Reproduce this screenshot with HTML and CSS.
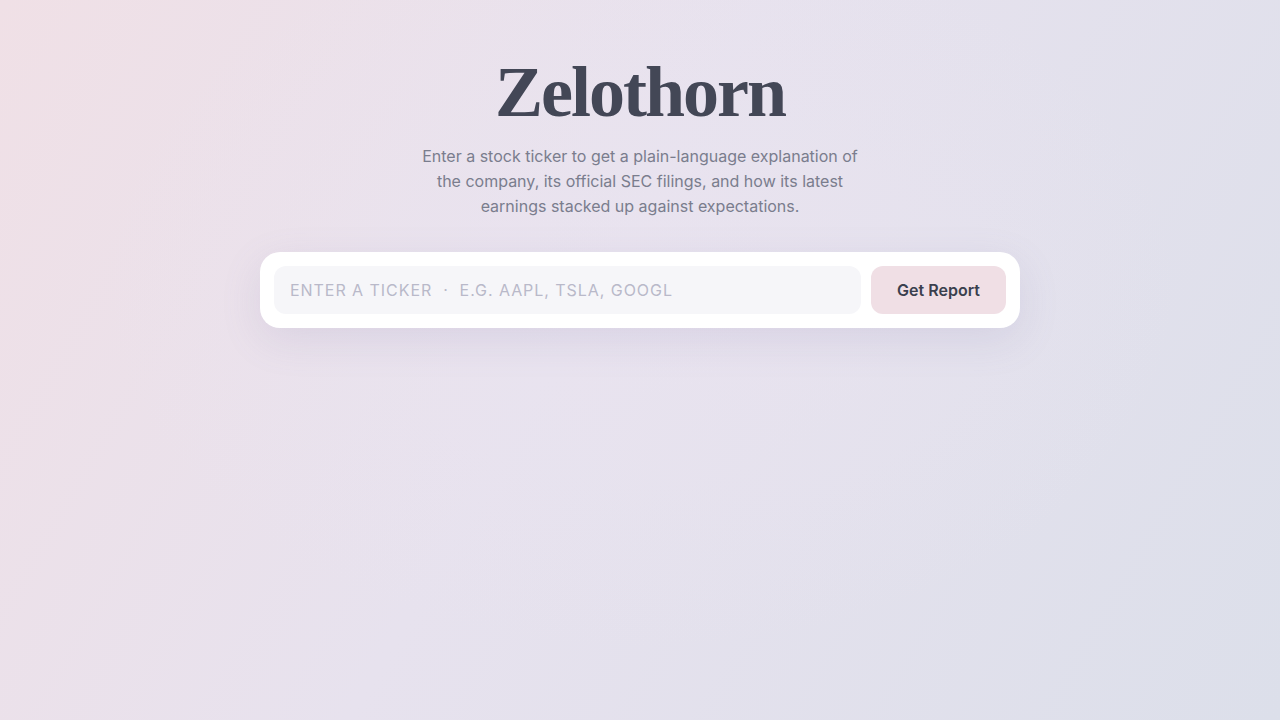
FILE: index.html
```html
<!DOCTYPE html>
<html lang="en">
<head>
  <meta charset="UTF-8" />
  <meta name="viewport" content="width=device-width, initial-scale=1.0" />
  <title>Zelothorn</title>
  <link rel="stylesheet" href="styles.css">
</head>
<body>
  <main class="hero">
    <h1 class="brand">Zelothorn</h1>
    <p class="intro">Enter a stock ticker to get a plain-language explanation of the company, its official SEC filings, and how its latest earnings stacked up against expectations.</p>

    <form class="search" onsubmit="return false;">
      <input class="search-input" type="text" placeholder="Enter a ticker &nbsp;&middot;&nbsp; e.g. AAPL, TSLA, GOOGL" />
      <button class="search-btn" type="submit">Get Report</button>
    </form>
  </main>
</body>
</html>
```

FILE: styles.css
```css
html, body {
  height: 100%;
}
body {
  margin: 0;
  font-family: Inter, "Noto Sans", sans-serif;
  background:
    radial-gradient(ellipse at 50% 40%, rgba(234, 228, 240, 0.7), rgba(234, 228, 240, 0) 60%),
    linear-gradient(120deg, #f0e0e6 0%, #e7e2ee 45%, #dcdfea 100%);
  color: #3f4352;
}
.hero {
  display: flex;
  flex-direction: column;
  align-items: center;
  padding-top: 52px;
}
.brand {
  margin: 0;
  font-family: "Liberation Serif", "DejaVu Serif", serif;
  font-weight: 700;
  font-size: 72px;
  letter-spacing: -2px;
  line-height: 80px;
  color: #434756;
}
.intro {
  margin: 12px 0 0;
  max-width: 440px;
  text-align: center;
  font-size: 16px;
  line-height: 25px;
  color: #7a7d8d;
}
.search {
  margin-top: 33px;
  width: 760px;
  box-sizing: border-box;
  display: flex;
  gap: 10px;
  padding: 14px;
  background: #fff;
  border-radius: 20px;
  box-shadow: 0 12px 40px rgba(120, 115, 160, 0.14);
}
.search-input {
  flex: 1;
  height: 48px;
  border: none;
  outline: none;
  border-radius: 12px;
  background: #f6f6f9;
  padding: 0 16px;
  font-family: inherit;
  font-size: 16px;
  letter-spacing: 0.95px;
  text-transform: uppercase;
  color: #3f4352;
}
.search-input::placeholder {
  color: #b9b9c9;
}
.search-btn {
  width: 135px;
  height: 48px;
  border: none;
  border-radius: 12px;
  background: #f0dfe5;
  font-family: inherit;
  font-size: 16px;
  font-weight: 600;
  color: #3a3f4e;
  cursor: pointer;
}
.search-btn:hover {
  background: #ead4dc;
}
```
